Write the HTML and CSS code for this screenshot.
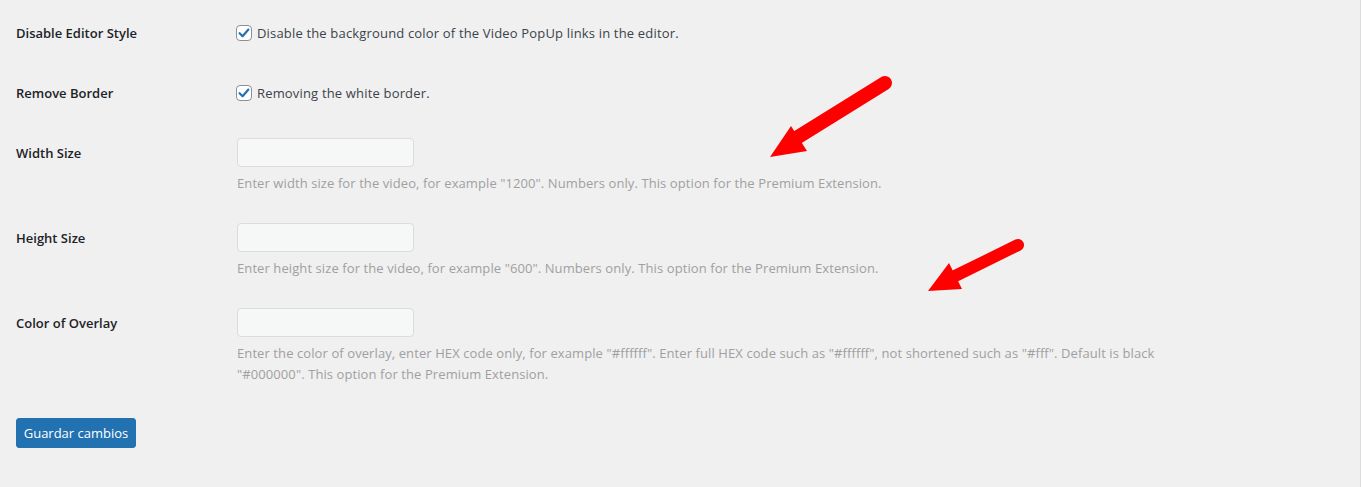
FILE: index.html
```html
<!DOCTYPE html>
<html lang="en">
<head>
<meta charset="utf-8">
<title>Settings</title>
<link rel="stylesheet" href="styles.css">
</head>
<body>
<div class="page">
  <form class="settings">
    <div class="row row-check">
      <div class="label">Disable Editor Style</div>
      <div class="field">
        <label class="check"><span class="box"><svg viewBox="0 0 16 16" width="16" height="16"><path d="M3.6 8.2 L6.6 11.2 L12.4 4.6" fill="none" stroke="#2271b1" stroke-width="2.2" stroke-linecap="round" stroke-linejoin="round"/></svg></span>Disable the background color of the Video PopUp links in the editor.</label>
      </div>
    </div>
    <div class="row row-check">
      <div class="label">Remove Border</div>
      <div class="field">
        <label class="check"><span class="box"><svg viewBox="0 0 16 16" width="16" height="16"><path d="M3.6 8.2 L6.6 11.2 L12.4 4.6" fill="none" stroke="#2271b1" stroke-width="2.2" stroke-linecap="round" stroke-linejoin="round"/></svg></span>Removing the white border.</label>
      </div>
    </div>
    <div class="row row-input">
      <div class="label label-input">Width Size</div>
      <div class="field">
        <input class="text" type="text" disabled>
        <p class="desc">Enter width size for the video, for example "1200". Numbers only. This option for the Premium Extension.</p>
      </div>
    </div>
    <div class="row row-input">
      <div class="label label-input">Height Size</div>
      <div class="field">
        <input class="text" type="text" disabled>
        <p class="desc">Enter height size for the video, for example "600". Numbers only. This option for the Premium Extension.</p>
      </div>
    </div>
    <div class="row row-input">
      <div class="label label-input">Color of Overlay</div>
      <div class="field">
        <input class="text" type="text" disabled>
        <p class="desc">Enter the color of overlay, enter HEX code only, for example "#ffffff". Enter full HEX code such as "#ffffff", not shortened such as "#fff". Default is black "#000000". This option for the Premium Extension.</p>
      </div>
    </div>
    <div class="actions">
      <button type="button" class="button-primary">Guardar cambios</button>
    </div>
  </form>
  <svg class="arrows" width="1361" height="487" viewBox="0 0 1361 487">
    <line x1="885" y1="83" x2="798" y2="137" stroke="#ff0000" stroke-width="14" stroke-linecap="round"/>
    <polygon points="770,157 791,126 807,151" fill="#ff0000"/>
    <line x1="1018" y1="245" x2="953" y2="277" stroke="#ff0000" stroke-width="12" stroke-linecap="round"/>
    <polygon points="928,291 949,263 962,289" fill="#ff0000"/>
  </svg>
</div>
</body>
</html>
```
FILE: styles.css
```css
html, body {
  margin: 0;
  padding: 0;
  background: #f0f0f1;
}
body {
  font-family: "Open Sans", "Noto Sans", sans-serif;
  font-size: 13px;
  color: #3c434a;
}
.page {
  position: relative;
  width: 1361px;
  height: 487px;
  overflow: hidden;
  border-right: 1px solid #dcdcdc;
  box-sizing: border-box;
}
.settings {
  display: flex;
  flex-direction: column;
  padding: 3px 0 0 16px;
}
.row {
  display: grid;
  grid-template-columns: 220px 1fr;
  align-items: start;
}
.row-check {
  padding: 20px 0;
}
.row-input {
  padding: 15px 0 14px;
}
.label {
  font-weight: 600;
  color: #1d2327;
  line-height: 20px;
}
.label-input {
  line-height: 30px;
}
.field {
  display: flex;
  flex-direction: column;
  align-items: flex-start;
}
.check {
  display: flex;
  align-items: center;
  line-height: 20px;
  gap: 5px;
  letter-spacing: 0.17px;
}
.box {
  width: 16px;
  height: 16px;
  box-sizing: border-box;
  border: 1px solid #8c8f94;
  border-radius: 4px;
  background: #fff;
  display: flex;
  align-items: center;
  justify-content: center;
}
.box svg {
  display: block;
  flex: none;
}
.text {
  width: 177px;
  height: 29px;
  margin: 0 0 0 1px;
  box-sizing: border-box;
  border: 1px solid #dcdcde;
  border-radius: 4px;
  background: #f6f7f7;
}
.desc {
  margin: 6px 0 0 1px;
  line-height: 21px;
  color: #a0a0a0;
  max-width: 950px;
  letter-spacing: 0.09px;
}
.actions {
  padding-top: 19px;
}
.button-primary {
  font-family: inherit;
  font-size: 13px;
  color: #fff;
  background: #2271b1;
  border: 1px solid #2271b1;
  border-radius: 3px;
  width: 120px;
  height: 30px;
  padding: 0;
  cursor: pointer;
}
.arrows {
  position: absolute;
  left: 0;
  top: 0;
  pointer-events: none;
}
```
